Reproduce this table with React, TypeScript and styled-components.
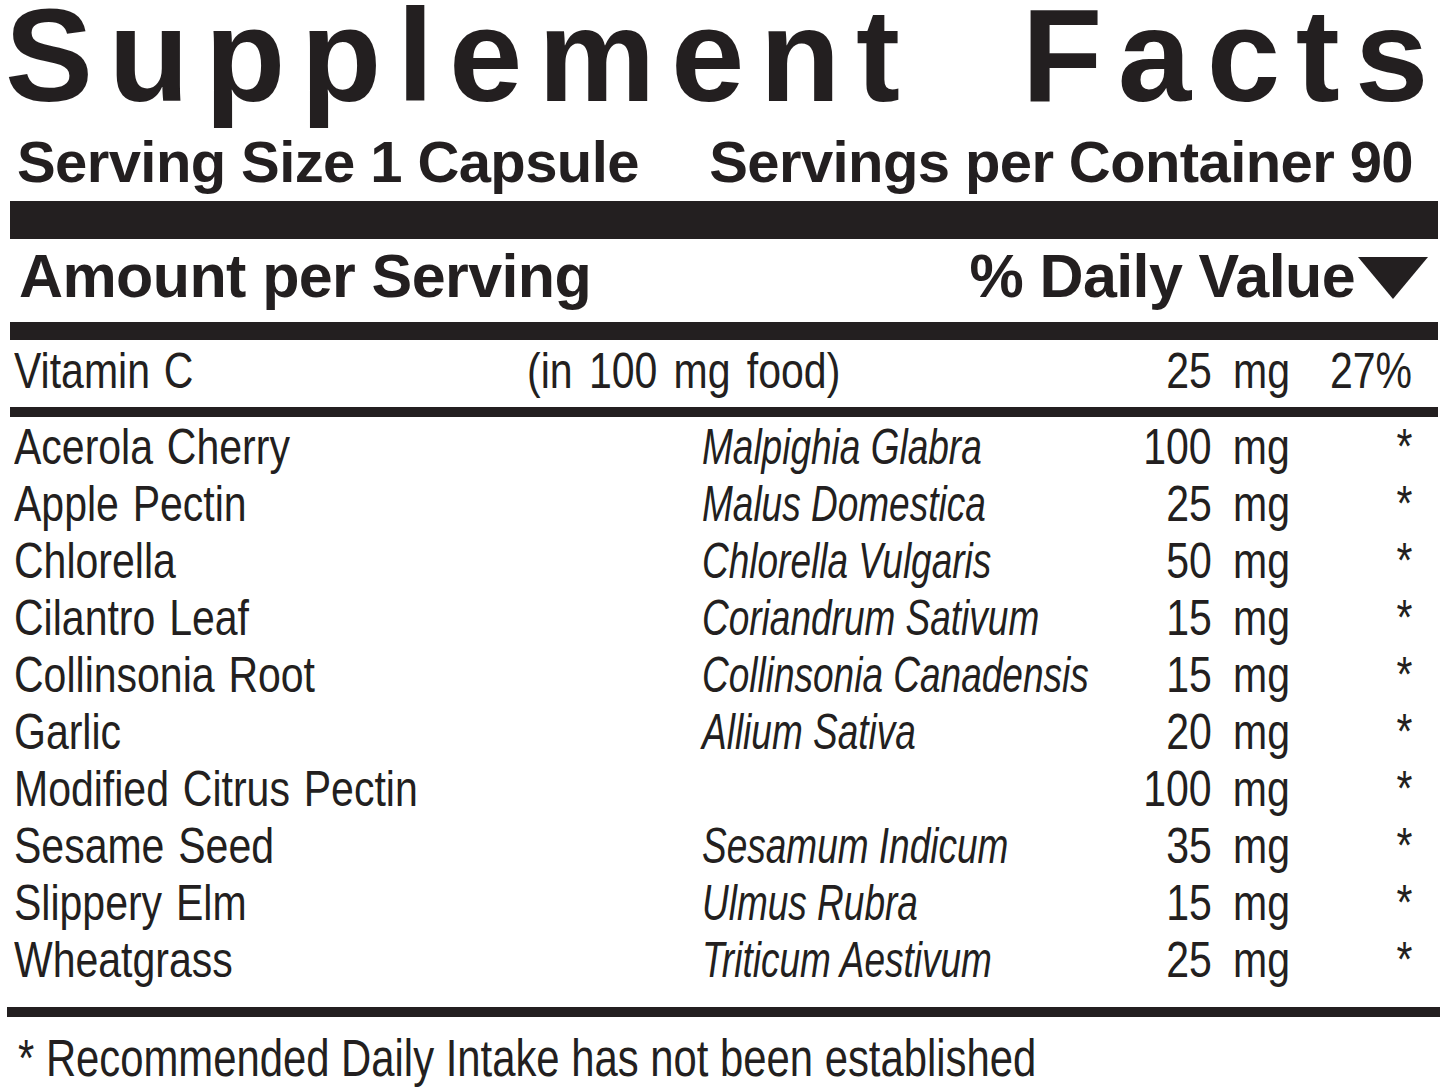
import React from 'react';
import styled, {createGlobalStyle} from 'styled-components';

const ink = '#231f20';

const GlobalStyle = createGlobalStyle`
  html, body {
    margin: 0;
    padding: 0;
    background: #fff;
  }
  body {
    width: 1445px;
    height: 1088px;
    overflow: hidden;
    color: ${ink};
  }
`

const Label = styled.div`
  width: 1445px;
  display: flex;
  flex-direction: column;
  font-family: "Liberation Sans", Arial, sans-serif;
`

const Title = styled.h1`
  margin: 0;
  padding: 0 1px 0 5px;
  display: flex;
  justify-content: space-between;
  font-weight: 700;
  font-size: 132px;
  line-height: 112px;
  letter-spacing: 15.5px;
`

const ServingLine = styled.div`
  margin: 15px 0 4px;
  padding: 0 32px 0 17px;
  display: flex;
  justify-content: space-between;
  font-weight: 700;
  font-size: 58px;
  line-height: 70px;
  letter-spacing: -0.6px;
  white-space: nowrap;
`

const Rule = styled.div<{ $h: number; $left?: number; $right?: number }>`
  height: ${p => p.$h}px;
  margin-left: ${p => p.$left ?? 10}px;
  margin-right: ${p => p.$right ?? 7}px;
  background: ${ink};
`

const HeaderRow = styled.div`
  padding: 0 17px 9px 19px;
  display: flex;
  justify-content: space-between;
  align-items: baseline;
  font-weight: 700;
  font-size: 61px;
  line-height: 74px;
  letter-spacing: -0.6px;
  white-space: nowrap;
`

const DailyValue = styled.span`
  display: inline-flex;
  align-items: baseline;
  gap: 3px;

  svg {
    width: 70px;
    height: 42px;
    align-self: center;
    transform: translateY(2px);
  }
`

// the label face is a condensed grotesque; squeeze Liberation Sans to its width
const Narrow = styled.span<{ $italic?: boolean; $right?: boolean }>`
  display: inline-block;
  font-style: ${p => (p.$italic ? 'italic' : 'normal')};
  transform: scaleX(${p => (p.$italic ? 0.74 : 0.82)});
  transform-origin: ${p => (p.$right ? 'right' : 'left')} center;
`

const Row = styled.div<{ $first?: number; $tall?: boolean }>`
  display: grid;
  grid-template-columns: ${p => p.$first ?? 688}px ${p => 1076 - (p.$first ?? 688)}px 200px 122px;
  padding: 0 33px 0 14px;
  height: ${p => (p.$tall ? 67 : 57)}px;
  font-size: 50px;
  line-height: ${p => (p.$tall ? 63 : 57)}px;
  white-space: nowrap;
`

const Cell = styled.div<{ $right?: boolean; $gap?: number }>`
  text-align: ${p => (p.$right ? 'right' : 'left')};
  word-spacing: ${p => p.$gap ?? 3}px;
`

const Rows = styled.div`
  padding-top: 2px;
  margin-bottom: 18px;
`

const Footnote = styled.p`
  margin: 12px 0 0;
  padding-left: 18px;
  font-size: 51px;
  line-height: 60px;
  white-space: nowrap;
`

const ingredients = [
  {name: 'Acerola Cherry', latin: 'Malpighia Glabra', amount: '100 mg'},
  {name: 'Apple Pectin', latin: 'Malus Domestica', amount: '25 mg'},
  {name: 'Chlorella', latin: 'Chlorella Vulgaris', amount: '50 mg'},
  {name: 'Cilantro Leaf', latin: 'Coriandrum Sativum', amount: '15 mg'},
  {name: 'Collinsonia Root', latin: 'Collinsonia Canadensis', amount: '15 mg'},
  {name: 'Garlic', latin: 'Allium Sativa', amount: '20 mg'},
  {name: 'Modified Citrus Pectin', latin: '', amount: '100 mg'},
  {name: 'Sesame Seed', latin: 'Sesamum Indicum', amount: '35 mg'},
  {name: 'Slippery Elm', latin: 'Ulmus Rubra', amount: '15 mg'},
  {name: 'Wheatgrass', latin: 'Triticum Aestivum', amount: '25 mg'},
];

function App() {
  return (
    <Label>
      <GlobalStyle/>
      <Title>
        <span>Supplement</span>
        <span>Facts</span>
      </Title>
      <ServingLine>
        <span>Serving Size 1 Capsule</span>
        <span>Servings per Container 90</span>
      </ServingLine>
      <Rule $h={38}/>
      <HeaderRow>
        <span>Amount per Serving</span>
        <DailyValue>
          % Daily Value
          <svg viewBox="0 0 70 42">
            <polygon points="0,0 70,0 35,42" fill={ink}/>
          </svg>
        </DailyValue>
      </HeaderRow>
      <Rule $h={18}/>
      <Row $first={513} $tall>
        <Cell><Narrow>Vitamin C</Narrow></Cell>
        <Cell $gap={6}><Narrow>(in 100 mg food)</Narrow></Cell>
        <Cell $right $gap={12}><Narrow $right>25 mg</Narrow></Cell>
        <Cell $right><Narrow $right>27%</Narrow></Cell>
      </Row>
      <Rule $h={10}/>
      <Rows>
        {ingredients.map(item => (
          <Row key={item.name}>
            <Cell><Narrow>{item.name}</Narrow></Cell>
            <Cell $gap={0}><Narrow $italic>{item.latin}</Narrow></Cell>
            <Cell $right $gap={12}><Narrow $right>{item.amount}</Narrow></Cell>
            <Cell $right><Narrow $right>*</Narrow></Cell>
          </Row>
        ))}
      </Rows>
      <Rule $h={10} $left={7} $right={5}/>
      <Footnote>
        <Narrow>* Recommended Daily Intake has not been established</Narrow>
      </Footnote>
    </Label>
  );
}

export default App;
